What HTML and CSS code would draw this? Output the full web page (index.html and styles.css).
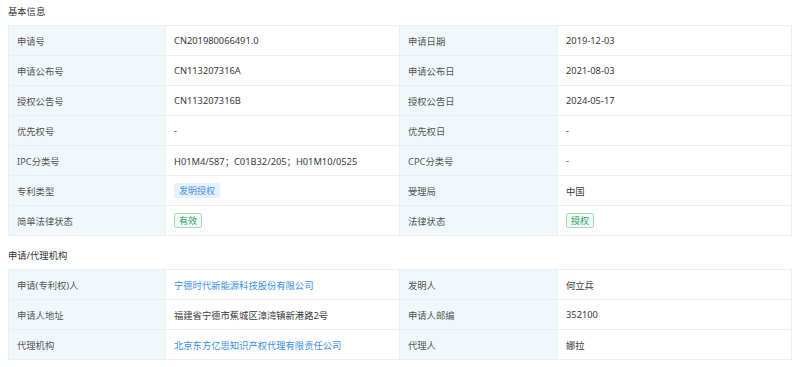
FILE: index.html
```html
<!DOCTYPE html>
<html lang="zh">
<head>
<meta charset="utf-8">
<link rel="stylesheet" href="styles.css">
</head>
<body>
<div class="page">
  <div class="section-title">基本信息</div>
  <table class="info">
    <colgroup><col class="c1"><col class="c2"><col class="c3"><col class="c4"></colgroup>
    <tr><th>申请号</th><td>CN201980066491.0</td><th>申请日期</th><td>2019-12-03</td></tr>
    <tr><th>申请公布号</th><td>CN113207316A</td><th>申请公布日</th><td>2021-08-03</td></tr>
    <tr><th>授权公告号</th><td>CN113207316B</td><th>授权公告日</th><td>2024-05-17</td></tr>
    <tr><th>优先权号</th><td>-</td><th>优先权日</th><td>-</td></tr>
    <tr><th>IPC分类号</th><td>H01M4/587；C01B32/205；H01M10/0525</td><th>CPC分类号</th><td>-</td></tr>
    <tr><th>专利类型</th><td><span class="tag tag-blue">发明授权</span></td><th>受理局</th><td>中国</td></tr>
    <tr><th>简单法律状态</th><td><span class="tag tag-green">有效</span></td><th>法律状态</th><td><span class="tag tag-green">授权</span></td></tr>
  </table>
  <div class="section-title second">申请/代理机构</div>
  <table class="info">
    <colgroup><col class="c1"><col class="c2"><col class="c3"><col class="c4"></colgroup>
    <tr><th>申请(专利权)人</th><td><a class="link">宁德时代新能源科技股份有限公司</a></td><th>发明人</th><td>何立兵</td></tr>
    <tr><th>申请人地址</th><td>福建省宁德市蕉城区漳湾镇新港路2号</td><th>申请人邮编</th><td>352100</td></tr>
    <tr><th>代理机构</th><td><a class="link">北京东方亿思知识产权代理有限责任公司</a></td><th>代理人</th><td>娜拉</td></tr>
  </table>
</div>
</body>
</html>
```

FILE: styles.css
```css
html, body {
  margin: 0;
  padding: 0;
  background: #ffffff;
}
body {
  font-family: "Noto Sans", "Noto Sans CJK SC", sans-serif;
  font-size: 9.3px;
  color: #333;
}
.page {
  padding: 4px 9px 0 8px;
}
.section-title {
  font-size: 9.3px;
  color: #333;
  height: 15px;
  line-height: 15px;
  margin-bottom: 6px;
}
.section-title.second {
  margin-top: 12px;
  margin-bottom: 6px;
}
.info {
  width: 783px;
  border-collapse: collapse;
  table-layout: fixed;
}
.c1 { width: 157px; }
.c2 { width: 234px; }
.c3 { width: 158px; }
.c4 { width: 234px; }
.info th, .info td {
  height: 29px;
  border: 1px solid #e9eff4;
  padding: 0 7px 0 8px;
  text-align: left;
  font-weight: normal;
  white-space: nowrap;
  overflow: hidden;
}
.info th {
  background: #f1f8fc;
  color: #555;
}
.info td {
  background: #fff;
  color: #3a3a3a;
}
.tag {
  display: inline-block;
  font-size: 9px;
  line-height: 13px;
  padding: 0 4px;
  border-radius: 2px;
  vertical-align: middle;
}
.tag-blue {
  background: #e5f1fd;
  color: #4a90e2;
  border: 1px solid #e5f1fd;
}
.tag-green {
  background: #f1faf5;
  color: #2f9e62;
  border: 1px solid #a3dcbd;
}
.link {
  color: #3a8ee6;
  text-decoration: none;
}
```
